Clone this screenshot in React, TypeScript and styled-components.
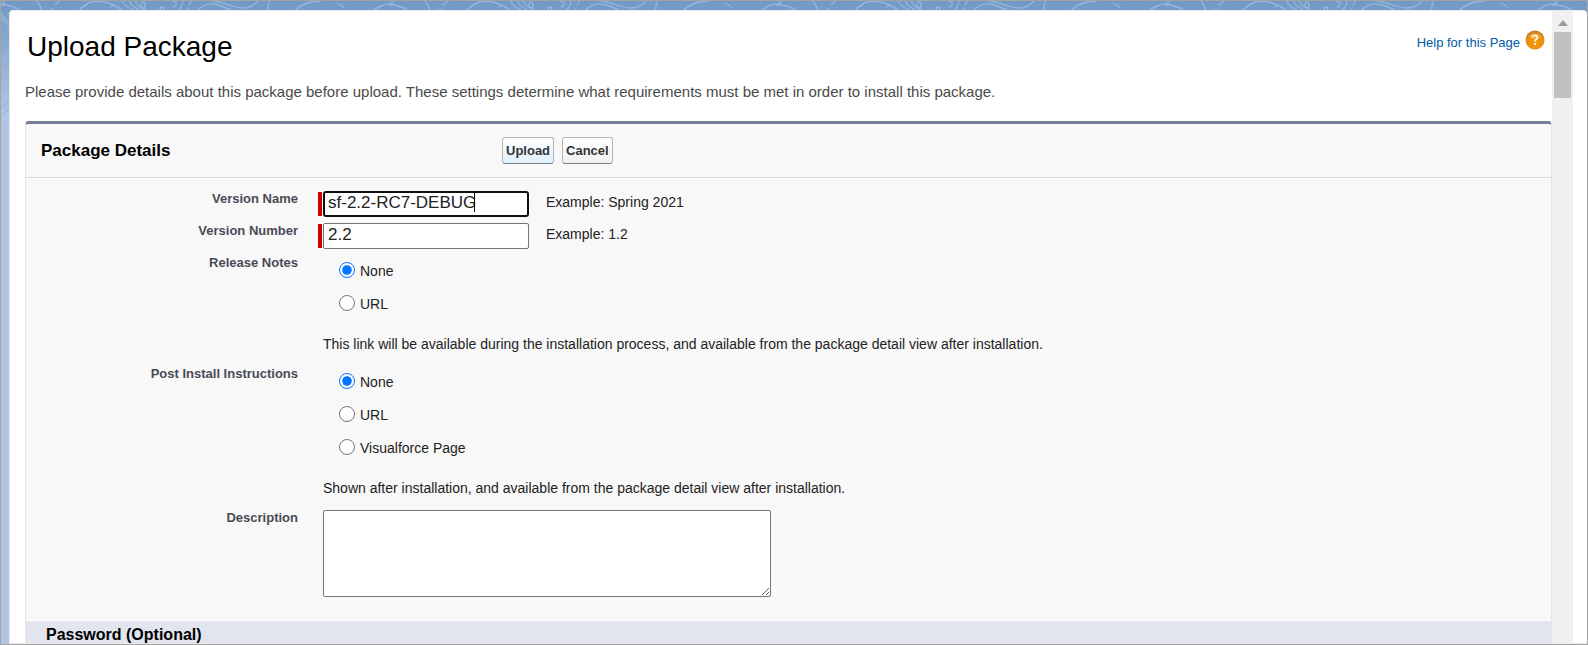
import React, { useState } from "react";
import styled, { createGlobalStyle } from "styled-components";

const GlobalStyle = createGlobalStyle`
  *, *::before, *::after { box-sizing: border-box; }
  body {
    margin: 0;
    font-family: "Liberation Sans", Arial, sans-serif;
    font-size: 14px;
    line-height: 16px;
    color: #222;
  }
`;

const Frame = styled.div`
  position: relative;
  display: flex;
  height: 100vh;
  overflow: hidden;
  padding: 9px 0 0 8px;
  border: 1px solid #a6a4a3;
  background: linear-gradient(#7099c6, #b1c5e2 112px, #b1c5e2);
`;

const Backdrop = styled.svg`
  position: absolute;
  top: 0;
  left: 0;
  width: 100%;
  height: 120px;
  fill: none;
  stroke: #96b6da;
  stroke-width: 1.3;
`;

const Card = styled.div`
  position: relative;
  display: flex;
  flex: 1;
  min-width: 0;
  padding-right: 14px;
  border: 1px solid #eaeaea;
  border-right: 0;
  border-radius: 4px 4px 0 0;
  background: #fff;
  overflow: hidden;
`;

const Content = styled.main`
  flex: 1;
  min-width: 0;
  padding-left: 15px;
`;

const ScrollTrack = styled.div`
  display: flex;
  flex-direction: column;
  align-items: center;
  gap: 6px;
  width: 21px;
  padding-top: 9px;
  background: #f0f0f0;
`;

const ScrollArrow = styled.svg`
  width: 10px;
  height: 6px;
  fill: #9c9c9c;
`;

const ScrollThumb = styled.div`
  width: 17px;
  height: 66px;
  background: #c1c1c1;
`;

const TitleRow = styled.div`
  display: flex;
  align-items: flex-start;
  justify-content: space-between;
  height: 72px;
  padding: 19px 7px 0 2px;
`;

const Title = styled.h1`
  margin: 0;
  font-size: 28px;
  line-height: 34px;
  font-weight: 400;
  color: #000;
`;

const HelpLink = styled.a`
  display: flex;
  gap: 5px;
  font-size: 13px;
  line-height: 26px;
  color: #015ba7;
  text-decoration: none;
`;

const HelpIcon = styled.svg`
  width: 20px;
  height: 20px;
`;

const Intro = styled.p`
  margin: 0 0 20px;
  font-size: 15px;
  line-height: 18px;
  color: #4a4a4a;
`;

const Panel = styled.section`
  border: 1px solid #e4e4e4;
  border-top: 3px solid #747e96;
  border-radius: 4px 4px 0 0;
  background: #f8f8f8;
`;

const PanelHeader = styled.header`
  display: flex;
  align-items: center;
  height: 54px;
  padding-left: 15px;
  border-bottom: 1px solid #d5d8da;
`;

const PanelTitle = styled.h2`
  flex: 0 0 461px;
  margin: 0;
  font-size: 17px;
  line-height: 20px;
  color: #000;
`;

const Buttons = styled.div`
  display: flex;
  gap: 8px;
`;

const Button = styled.button<{ $primary?: boolean }>`
  height: 27px;
  padding: 0 3px;
  border: 1px solid #b5b5b5;
  border-bottom-color: #7f7f7f;
  border-radius: 3px;
  background: ${(p) =>
    p.$primary
      ? "linear-gradient(#fff, #f0f8fe 50%, #dff0fc)"
      : "linear-gradient(#fff, #f8f8f8 50%, #f0f0f0)"};
  font-family: inherit;
  font-size: 13px;
  font-weight: 700;
  color: #333;
`;

const Form = styled.form`
  display: grid;
  grid-template-columns: 272px 1fr;
  column-gap: 20px;
  row-gap: 6px;
  padding: 12px 0 23px;
  border-top: 1px solid #fff;
`;

const FieldLabel = styled.label`
  padding-top: 1px;
  font-size: 13px;
  line-height: 14px;
  font-weight: 700;
  color: #4a4a56;
  text-align: right;
`;

const FieldRow = styled.div`
  display: flex;
  align-items: center;
  gap: 1px;
`;

const RequiredMark = styled.span`
  width: 4px;
  height: 24px;
  background: #c00;
`;

const InputBox = styled.span`
  position: relative;
  display: flex;
  width: 206px;
`;

const Input = styled.input<{ $active?: boolean }>`
  width: 100%;
  height: 26px;
  padding: ${(p) => (p.$active ? "0 3px 3px" : "0 4px 3px")};
  border: ${(p) => (p.$active ? "2px solid #101010" : "1px solid #767676")};
  border-radius: ${(p) => (p.$active ? "3px" : "2px")};
  background: #fff;
  font-family: inherit;
  font-size: 17px;
  color: #222;
  outline: none;
`;

const Caret = styled.span`
  position: absolute;
  top: 2px;
  left: 151px;
  width: 1px;
  height: 19px;
  background: #000;
`;

const Example = styled.span`
  padding: 0 0 4px 16px;
`;

const RadioField = styled.div`
  display: flex;
  flex-direction: column;
  padding: 7px 0 0 5px;
`;

const RadioLabel = styled.label`
  display: flex;
  align-items: flex-start;
  gap: 5px;
  height: 33px;
  padding-left: 16px;
  line-height: 18px;
`;

const Radio = styled.input`
  width: 16px;
  height: 16px;
  margin: 0;
`;

const Note = styled.p`
  margin: 8px 0;
`;

const TextArea = styled.textarea`
  display: block;
  width: 448px;
  height: 87px;
  margin-left: 5px;
  border: 1px solid #767676;
  border-radius: 2px;
  background: #fff;
  font: inherit;
`;

const SubHeading = styled.h3`
  margin: 0;
  padding: 4px 20px 8px;
  border-top: 1px solid #fff;
  background: #e2e4ee;
  font-size: 16px;
  line-height: 20px;
  color: #000;
`;

type RadioGroupProps = { name: string; options: string[]; note: string };

function RadioGroup({ name, options, note }: RadioGroupProps) {
  const [value, setValue] = useState(options[0]);
  return (
    <RadioField role="radiogroup" aria-labelledby={`${name}-label`}>
      {options.map((option) => (
        <RadioLabel key={option}>
          <Radio
            type="radio"
            name={name}
            checked={value === option}
            onChange={() => setValue(option)}
          />
          {option}
        </RadioLabel>
      ))}
      <Note>{note}</Note>
    </RadioField>
  );
}

type RequiredFieldProps = { id: string; initial: string; example: string; active?: boolean };

function RequiredField({ id, initial, example, active }: RequiredFieldProps) {
  const [value, setValue] = useState(initial);
  return (
    <FieldRow>
      <RequiredMark />
      <InputBox>
        <Input id={id} value={value} $active={active} onChange={(e) => setValue(e.target.value)} />
        {active && <Caret />}
      </InputBox>
      <Example>{example}</Example>
    </FieldRow>
  );
}

function Swirls() {
  return (
    <Backdrop aria-hidden="true">
      <defs>
        <pattern
          id="swirls"
          width="388"
          height="120"
          patternUnits="userSpaceOnUse"
          patternTransform="translate(-1 -1)"
        >
          <path d="M0 4 Q12 5 21 11 M5 0 Q4 4 1 6 M36 0 Q41 5 42 12 M55 5 L60 1 M52 8 L52 11" />
          <path d="M78 12 Q86 1 98 1 Q112 2 125 12 M110 7 L115 5" />
          <path d="M122 0 Q125 8 138 12 M129 0 Q132 8 144 12 M135 0 Q136 6 146 10" />
          <ellipse cx="143" cy="5" rx="2" ry="3" />
          <ellipse cx="162" cy="10" rx="2" ry="3" />
          <path d="M172 2 Q177 0 176 4 Q175 8 173 7 M183 0 Q183 6 177 12 M188 8 L187 12 M192 0 Q190 3 189 5" />
          <path d="M196 12 Q203 3 214 4 Q224 6 234 12 M210 0 Q222 2 232 6 Q249 12 259 0" />
          <path d="M270 0 Q267 5 268 12 M294 12 Q303 1 321 1 M337 3 Q342 5 344 8" />
          <path d="M371 12 Q380 5 388 4" />
          <path d="M0 12 Q6 21 12 24 M0 17 Q5 23 12 28 M0 58 Q6 59 10 51 M0 64 Q7 63 12 57 M0 81 L3 79 M0 108 Q5 107 8 101 M0 115 Q6 113 10 107" />
        </pattern>
      </defs>
      <rect width="100%" height="120" fill="url(#swirls)" stroke="none" />
    </Backdrop>
  );
}

export default function App() {
  return (
    <>
      <GlobalStyle />
      <Frame>
        <Swirls />
        <Card>
          <Content>
            <TitleRow>
              <Title>Upload Package</Title>
              <HelpLink href="#help">
                Help for this Page
                <HelpIcon viewBox="0 0 20 20" aria-hidden="true">
                  <defs>
                    <radialGradient id="orange" cx="50%" cy="65%" r="65%">
                      <stop offset="0" stopColor="#f59a0c" />
                      <stop offset="0.7" stopColor="#e98e0c" />
                      <stop offset="1" stopColor="#b9762a" />
                    </radialGradient>
                  </defs>
                  <circle cx="10" cy="10" r="9.5" fill="url(#orange)" />
                  <path d="M3 7 A8 7 0 0 1 17 7 Q10 11 3 7Z" fill="#fff" opacity="0.2" />
                  <path
                    d="M7.3 7.4 Q7.5 5.4 10 5.4 Q12.4 5.5 12.4 7.4 Q12.4 8.5 11.2 9.3 Q10 10.2 10 11.4"
                    fill="none"
                    stroke="#fff3dc"
                    strokeWidth="1.8"
                  />
                  <rect x="9" y="13" width="2" height="2" fill="#fff3dc" />
                </HelpIcon>
              </HelpLink>
            </TitleRow>
            <Intro>
              Please provide details about this package before upload. These settings determine what
              requirements must be met in order to install this package.
            </Intro>
            <Panel>
              <PanelHeader>
                <PanelTitle>Package Details</PanelTitle>
                <Buttons>
                  <Button type="submit" form="package-form" $primary>
                    Upload
                  </Button>
                  <Button type="button">Cancel</Button>
                </Buttons>
              </PanelHeader>
              <Form id="package-form" onSubmit={(e) => e.preventDefault()}>
                <FieldLabel htmlFor="version-name">Version Name</FieldLabel>
                <RequiredField
                  id="version-name"
                  initial="sf-2.2-RC7-DEBUG"
                  example="Example: Spring 2021"
                  active
                />
                <FieldLabel htmlFor="version-number">Version Number</FieldLabel>
                <RequiredField id="version-number" initial="2.2" example="Example: 1.2" />
                <FieldLabel as="span" id="notes-label">
                  Release Notes
                </FieldLabel>
                <RadioGroup
                  name="notes"
                  options={["None", "URL"]}
                  note="This link will be available during the installation process, and available from the package detail view after installation."
                />
                <FieldLabel as="span" id="post-install-label">
                  Post Install Instructions
                </FieldLabel>
                <RadioGroup
                  name="post-install"
                  options={["None", "URL", "Visualforce Page"]}
                  note="Shown after installation, and available from the package detail view after installation."
                />
                <FieldLabel htmlFor="description">Description</FieldLabel>
                <TextArea id="description" />
              </Form>
              <SubHeading>Password (Optional)</SubHeading>
            </Panel>
          </Content>
          <ScrollTrack aria-hidden="true">
            <ScrollArrow viewBox="0 0 10 6">
              <path d="M5 0 L10 6 H0Z" />
            </ScrollArrow>
            <ScrollThumb />
          </ScrollTrack>
        </Card>
      </Frame>
    </>
  );
}
